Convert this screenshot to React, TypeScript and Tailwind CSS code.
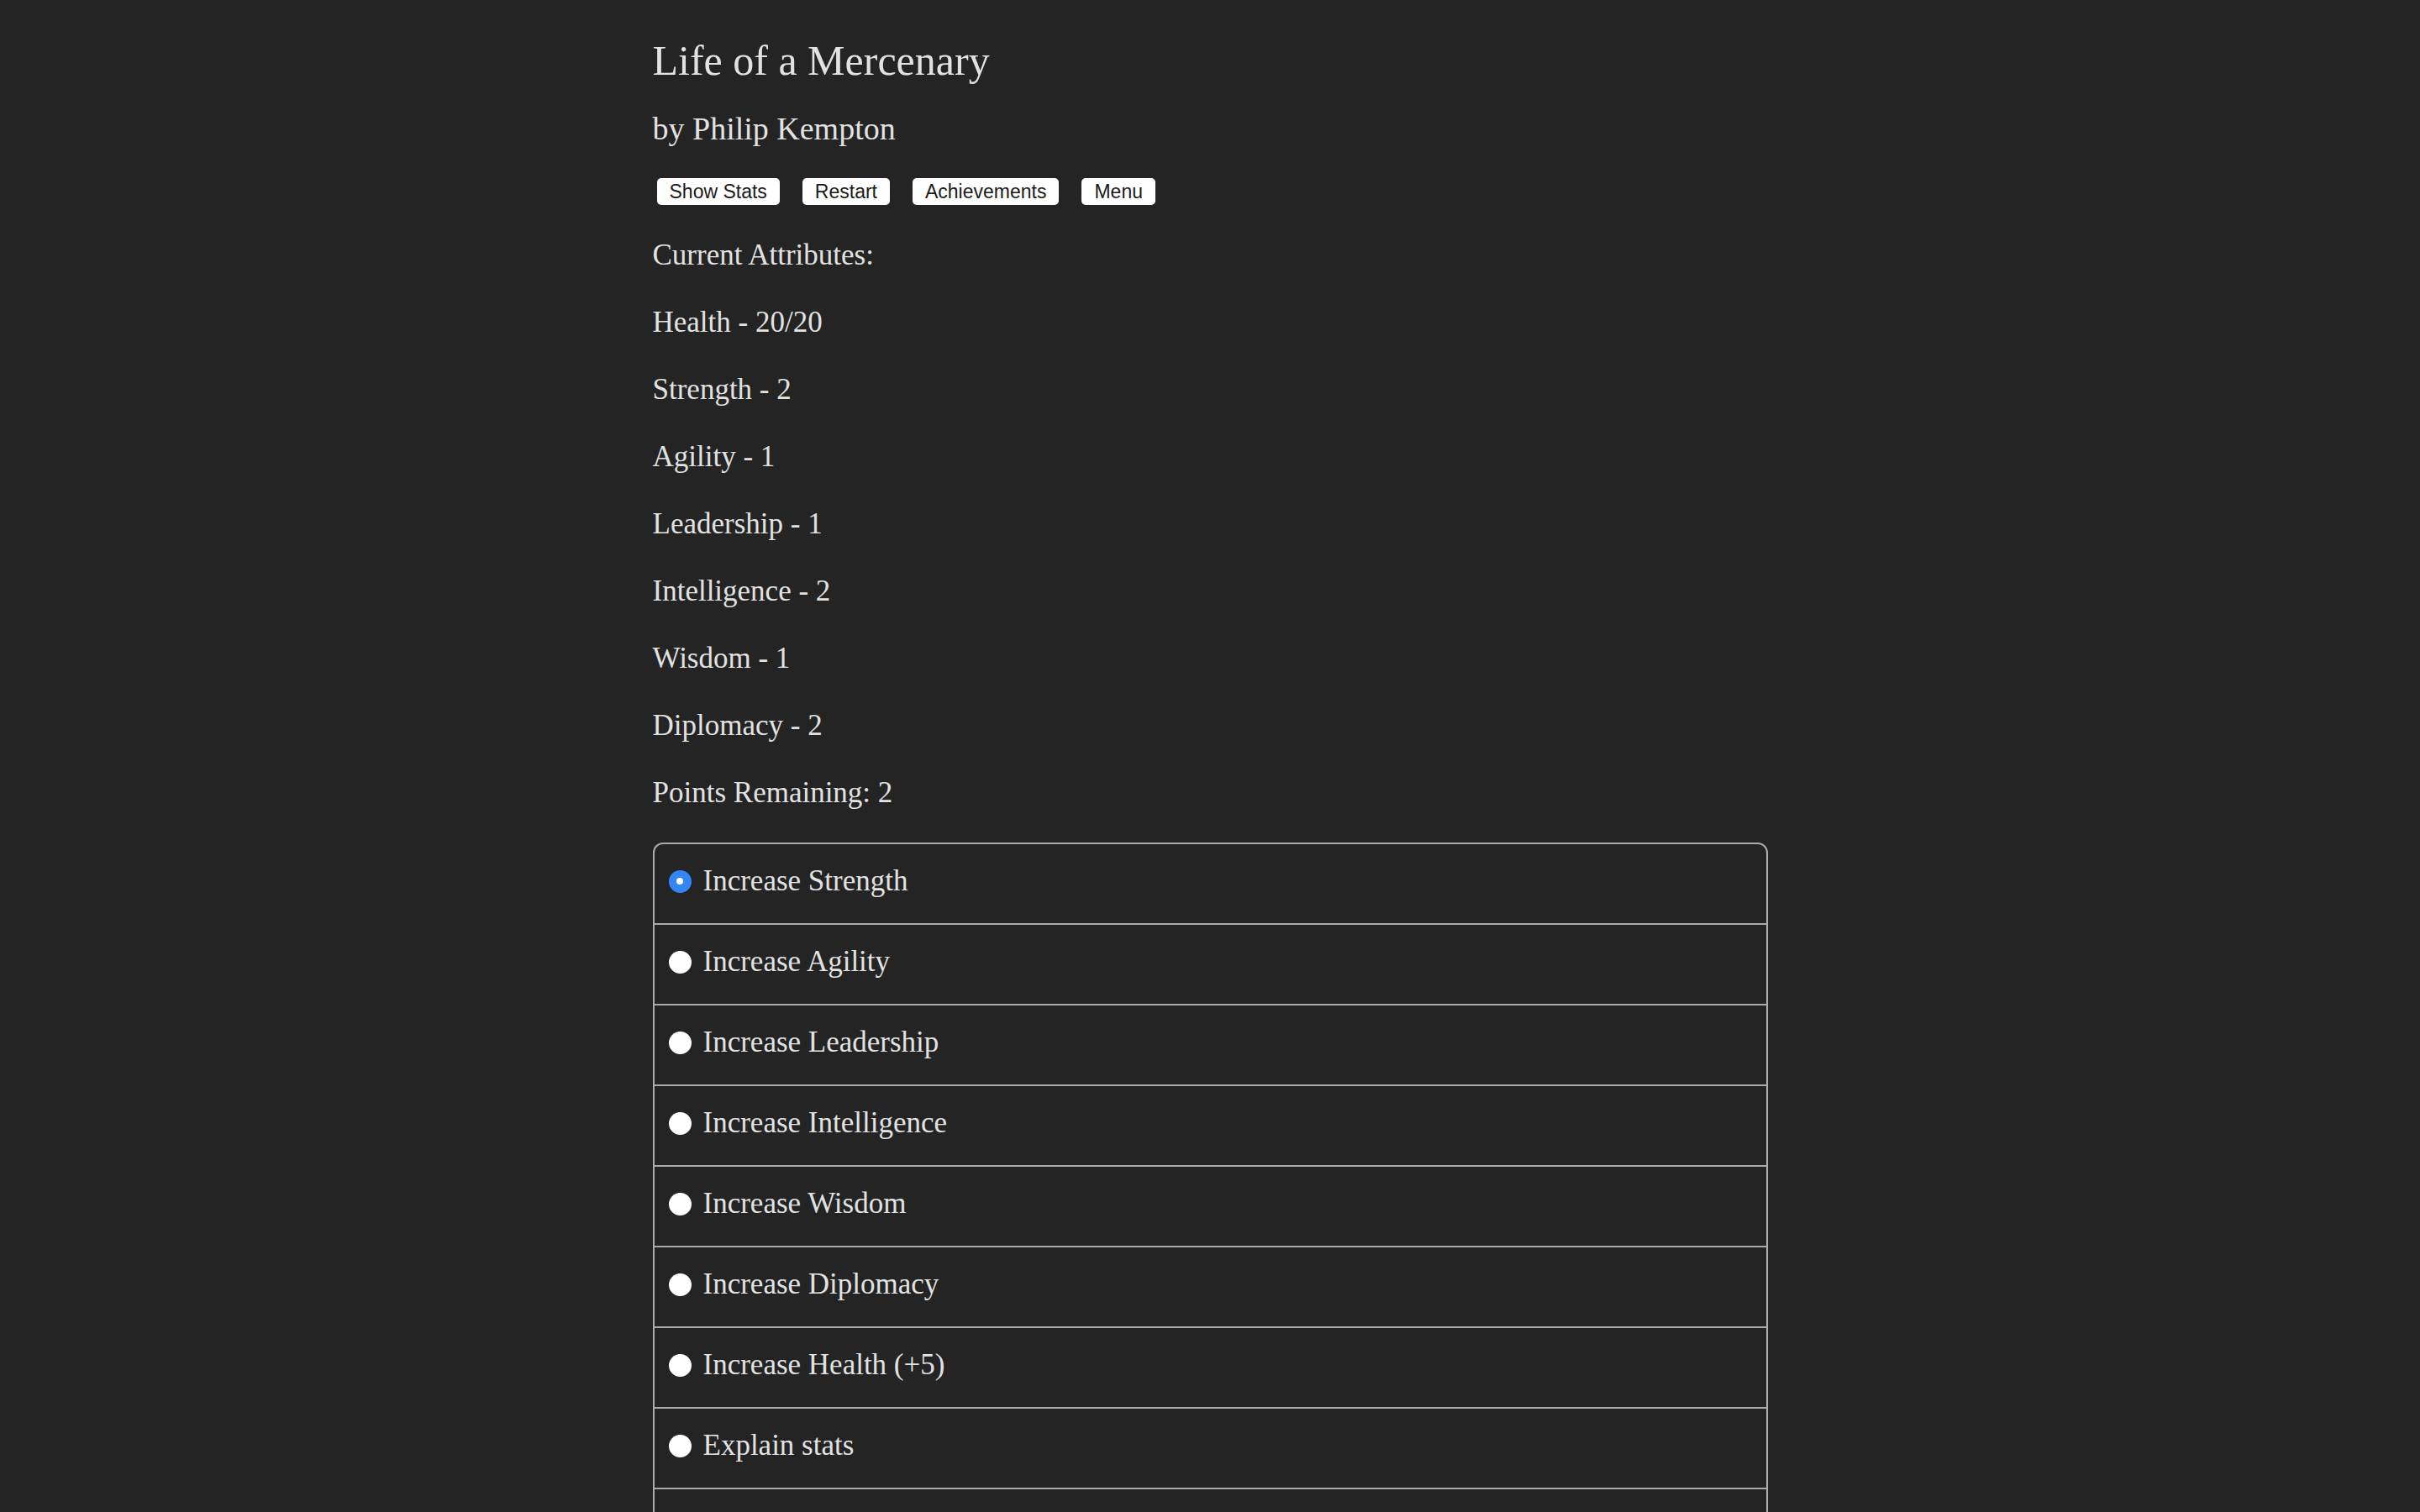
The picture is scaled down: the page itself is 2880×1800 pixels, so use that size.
import React, { useState } from 'react'

const stats = [
  'Health - 20/20',
  'Strength - 2',
  'Agility - 1',
  'Leadership - 1',
  'Intelligence - 2',
  'Wisdom - 1',
  'Diplomacy - 2',
]

const options = [
  'Increase Strength',
  'Increase Agility',
  'Increase Leadership',
  'Increase Intelligence',
  'Increase Wisdom',
  'Increase Diplomacy',
  'Increase Health (+5)',
  'Explain stats',
]

const buttons = ['Show Stats', 'Restart', 'Achievements', 'Menu']

export default function App() {
  const [picked, setPicked] = useState(0)

  return (
    <div className="min-h-screen bg-[#242424] text-[#e2e2e2] font-['Liberation_Serif',serif]">
      <div className="mx-auto w-[1327px] pt-[44px] pb-20">
        <h1 className="text-[50px] leading-[56px]">Life of a Mercenary</h1>
        <h2 className="mt-[31px] text-[38px] leading-[44px]">by Philip Kempton</h2>

        <div className="mt-[37px] ml-[5px] flex gap-[27px]">
          {buttons.map(b => (
            <button
              key={b}
              className="h-[32px] rounded-[5px] bg-white px-[15px] text-[23px] leading-[26px] text-[#1a1a1a] font-['Liberation_Sans',sans-serif]"
            >
              {b}
            </button>
          ))}
        </div>

        <div className="mt-[40px] text-[35px] leading-[40px]">
          <p className="mb-[40px]">Current Attributes:</p>
          {stats.map(s => (
            <p key={s} className="mb-[40px]">{s}</p>
          ))}
          <p className="mb-[39px]">Points Remaining: 2</p>
        </div>

        <div className="rounded-[12px] border-2 border-[#ababab]">
          {options.map((o, i) => (
            <label
              key={o}
              onClick={() => setPicked(i)}
              className={
                'flex cursor-pointer items-center gap-[14px] pl-[17px] pb-[6px] text-[35px] ' +
                (i > 0 ? 'h-[96px] border-t-2 border-[#ababab]' : 'h-[94px]')
              }
            >
              {picked === i ? (
                <span className="flex h-[27px] w-[27px] shrink-0 items-center justify-center rounded-full bg-[#3485f6]">
                  <span className="h-[8px] w-[8px] rounded-full bg-white" />
                </span>
              ) : (
                <span className="h-[27px] w-[27px] shrink-0 rounded-full bg-white" />
              )}
              <span>{o}</span>
            </label>
          ))}
          <div className="h-[96px] border-t-2 border-[#ababab]" />
        </div>
      </div>
    </div>
  )
}
